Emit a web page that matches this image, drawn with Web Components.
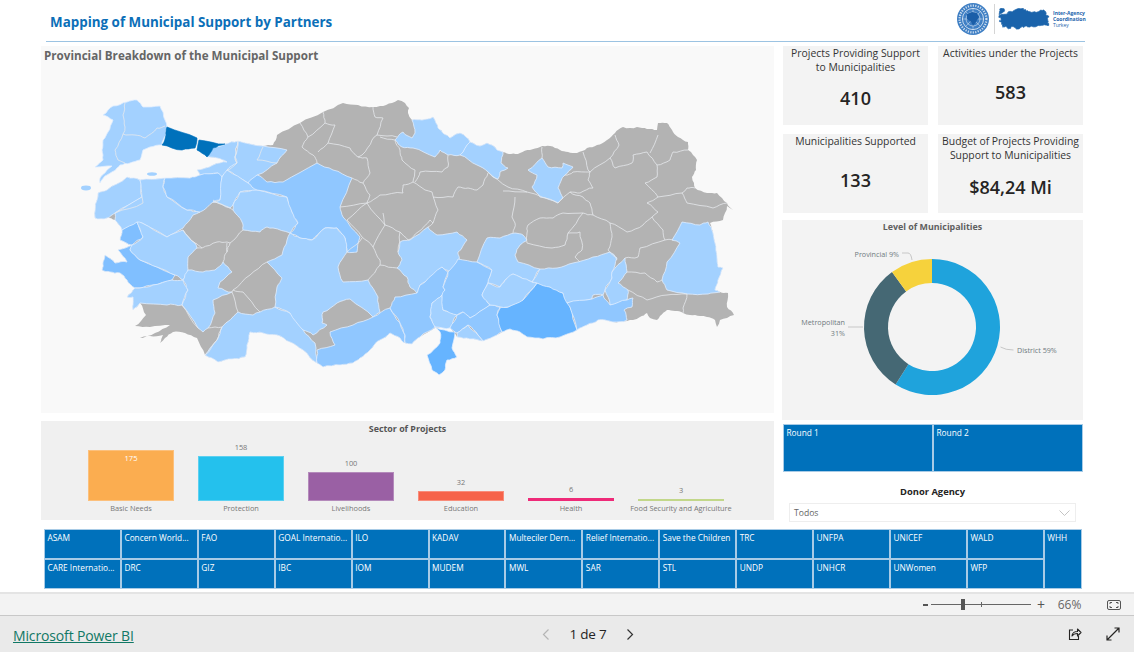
<!DOCTYPE html>
<html lang="en"><head><meta charset="utf-8"><title>Mapping of Municipal Support by Partners</title>
<style>
html,body{margin:0;padding:0;height:652px;overflow:hidden;background:#fff;font-family:"Open Sans","Liberation Sans",sans-serif}
</style></head><body>
<rs-app></rs-app>
<script>
const L='#a3d1ff',M='#90c7ff',I='#80bfff',S='#66b4ff',D='#0071bb';
const BASE="207,157 213,148 225,144 238,141 263,146 273,145 277,135 300,123 323,112 343,103 358,105 373,107 380,106 392,103 398,100 405,103 409,108 408,113 412,120 422,120 433,117 436,123 438,128 444,134 450,138 456,134 460,133 466,137 470,142 473,143 480,146 487,143 492,145 497,150 503,152 511,154 520,153 530,150 540,147 550,146 560,150 568,152 577,153 587,148 597,145 607,140 615,133 623,127 630,128 637,127 647,129 657,130 658,123 667,123 672,130 678,137 683,140 688,142 688,150 693,155 697,160 696,170 692,177 694,183 695,188 707,193 717,193 722,198 727,203 733,210 727,206 725,213 723,220 710,223 713,233 715,243 717,257 718,267 723,268 718,280 715,290 720,292 728,293 727,307 734,315 727,318 720,320 717,327 715,320 707,317 700,316 690,315 683,313 675,311 667,310 660,316 657,320 650,318 647,313 640,317 633,320 627,321 613,322 605,320 598,320 587,325 577,330 560,337 543,339 527,337 520,332 510,329 497,335 483,341 470,339 457,337 450,328 435,328 420,337 412,344 405,343 400,338 390,333 380,340 370,350 360,358 353,363 340,365 323,367 317,363 303,350 290,342 277,335 263,333 250,332 247,345 245,357 232,359 218,362 205,355 197,338 185,333 173,332 165,338 160,343 163,335 150,336 140,338 155,333 170,325 150,327 135,326 146,315 140,303 133,310 133,297 127,297 135,288 127,280 120,273 110,272 102,270 103,262 105,255 115,263 127,262 118,250 132,245 120,240 122,230 115,220 107,218 95,218 97,200 98,193 107,190 127,177 140,180 165,178 190,178 200,175 197,170 213,165 227,162 217,158";
const REGIONS=[
[L,"127,102 137,100 143,107 160,106 163,112 165,120 167,127 166,135 162,145 150,147 143,150 140,160 130,163 120,165 117,168 107,175 100,183 100,178 107,170 112,166 97,167 95,167 103,160 102,150 103,140 108,132 113,120 103,115 108,110 113,106"],
[D,"167,127 197,138 195,148 182,150 162,145 166,135"],
[D,"199,140 225,144 213,148 207,157 197,150"],
[L,"207,157 213,148 225,144 238,141 235,157 237,163 227,170 222,177 218,173 200,175 197,170 213,165 227,162 217,158"],
[L,"238,141 263,146 287,150 277,163 257,175 248,183 227,170 237,163 235,157"],
[L,"98,193 107,190 127,177 140,180 142,197 115,213 107,218 95,218 97,200"],
[L,"140,180 165,178 163,187 167,197 187,210 200,212 193,215 183,228 167,237 142,223 122,230 115,220 115,213 142,197"],
[M,"165,178 190,178 200,175 218,173 222,177 220,200 213,202 200,212 187,210 167,197 163,187"],
[L,"222,177 227,170 248,183 257,190 240,192 233,205 230,208 213,202 220,200"],
[L,"240,192 257,190 287,197 292,212 298,223 290,233 273,228 267,227 260,232 243,230 242,222 233,210 233,205"],
[M,"248,183 257,175 267,182 283,182 317,163 333,170 352,178 340,207 343,217 360,237 357,252 347,252 345,238 337,228 325,228 312,240 300,238 290,233 298,223 292,212 287,197 257,190"],
[I,"122,230 137,222 143,237 132,245 130,250 140,260 157,267 175,275 172,280 153,285 140,288 135,288 127,280 120,273 110,272 102,270 103,262 105,255 115,263 127,262 118,250 132,245 120,240"],
[L,"137,222 142,223 167,237 183,230 195,243 197,248 188,257 188,270 183,280 175,275 157,267 140,260 130,250 132,245 143,237"],
[L,"140,288 153,285 172,280 183,280 188,290 182,305 167,305 140,303 133,310 133,297 127,297 135,288"],
[L,"183,280 188,270 203,272 215,270 223,262 232,272 220,282 218,288 232,292 213,300 215,313 208,328 203,332 198,328 182,305 188,290"],
[L,"275,307 290,313 303,330 315,343 317,363 303,350 290,342 277,335 263,333 250,332 247,345 245,357 232,359 218,362 205,355 217,340 222,327 238,312 253,315 260,312"],
[L,"267,262 282,255 287,240 290,233 300,238 312,240 325,228 337,228 345,238 347,252 338,267 343,282 368,280 378,297 380,312 373,317 350,299 337,303 323,312 322,323 327,325 313,335 303,330 290,313 275,307 277,287 282,278"],
[M,"317,363 317,350 335,345 330,332 353,325 373,317 390,308 400,323 405,335 404,343 400,338 390,333 380,340 370,350 360,358 353,363 340,365 323,367"],
[L,"400,242 410,240 428,227 437,235 457,232 467,240 458,252 459,260 450,272 442,267 425,282 420,285 417,293 410,287 407,277 397,268 402,260 398,252"],
[M,"395,297 417,293 420,285 425,282 442,267 448,272 443,287 445,290 442,295 432,303 430,317 435,327 420,337 412,344 405,343 405,335 400,323 390,308"],
[L,"442,295 443,310 457,315 450,328 435,327 430,317 432,303"],
[M,"448,272 458,259 477,262 492,270 488,283 482,295 490,305 470,318 463,312 457,315 443,310 442,295 445,290 443,287"],
[M,"457,315 463,312 470,318 490,305 500,307 497,315 502,332 497,335 483,341 478,335 468,325 457,333 450,328"],
[L,"457,333 468,325 478,335 483,341 470,339 457,337"],
[S,"435,327 455,332 452,348 457,357 447,360 445,370 439,375 432,370 427,355 440,343 440,332"],
[S,"500,308 508,307 523,300 537,283 550,287 563,293 570,307 577,330 560,337 543,339 527,337 520,332 510,329 502,332 497,315"],
[L,"477,262 487,238 500,238 515,233 523,235 527,240 520,245 515,255 518,262 540,269 532,282 520,277 513,274 505,280 500,287 488,283 492,270"],
[L,"488,283 500,287 505,280 513,274 520,277 532,282 537,283 523,300 508,307 490,305 482,295"],
[L,"540,269 557,268 573,263 593,257 610,252 617,258 612,272 612,278 605,290 603,295 593,295 592,299 567,303 563,293 550,287 537,283 532,282"],
[L,"612,272 625,258 627,272 618,283 628,290 627,300 610,305 605,290 612,278"],
[M,"567,303 592,299 603,295 610,305 627,300 633,298 632,307 624,310 627,320 613,322 605,320 598,320 587,325 577,330 570,307"],
[L,"682,222 700,225 708,222 713,233 715,243 717,257 718,267 723,268 718,280 715,290 720,292 708,294 687,294 667,290 662,280 667,262 680,243 672,240"],
[L,"412,120 422,120 433,117 436,123 438,128 444,134 450,138 456,134 460,133 466,137 470,142 460,155 448,155 440,150 435,157 413,148 402,147 395,140 403,132 412,138 415,133"],
[L,"470,142 473,143 480,146 487,143 492,145 497,150 503,152 501,163 508,168 500,172 498,179 493,177 488,172 477,165 460,155"],
[L,"542,158 548,167 562,168 563,163 573,167 565,175 558,188 563,198 558,203 540,197 532,187 537,175 528,170"]
];
const LINES=[
"125,103 123,115 125,127 123,134 115,150 118,160 125,163","123,134 135,135 145,138 157,128 165,126",
"142,197 143,203 115,213","263,147 257,160 277,163","238,141 235,157 237,163 227,170",
"300,123 308,137 302,147 313,155 317,163","308,137 325,123 323,112","325,123 335,125 328,143 318,152","328,143 350,148 358,157 367,158 370,173 363,183 352,178",
"373,107 375,117 383,118 377,135 397,137","377,135 372,140 362,155 358,157","380,137 395,140 400,150 402,160 415,170 413,182 403,185 403,193 380,195 367,203",
"413,182 425,190 432,192 438,210 433,223 428,227","433,197 453,197 458,187 468,188 477,190 483,185 488,173","415,182 420,172 442,172 448,167 448,155",
"488,172 508,187 527,192 558,203","515,197 512,217 515,223 513,233","503,191 527,192","558,203 570,192 583,197 590,203 593,215 583,213 563,213 553,218 540,218 528,225 527,233 527,243 552,248 565,245 568,233 580,232 582,250 575,257 580,262","583,213 568,233",
"593,215 610,223 612,237 608,250 617,260","610,223 627,232 643,225 652,217 658,212 647,203 658,197 645,183 657,177 657,165 647,152 633,155 632,163 615,168 610,158 590,172 588,180 593,188 580,193 570,192",
"590,172 573,172 565,175","542,147 542,158","583,152 588,170 590,172","615,135 619,145 610,158","658,135 650,153","657,165 670,160 673,152 688,150","658,197 682,193 687,188 695,188","682,193 687,203 713,208 727,203",
"652,217 663,230 665,240 673,240","665,240 640,248 638,257 625,258","627,272 645,273 657,282 662,280","628,290 647,300 667,295 687,294","687,294 683,308 683,313",
"367,203 347,220 362,237 373,247 385,225 367,203","383,213 385,225 400,232 408,240","373,247 380,260 380,265 397,268","380,265 368,280","400,232 398,252","362,238 347,252",
"408,240 418,232 430,220 433,223","340,207 367,203","363,183 370,195 367,203",
"183,230 195,243 202,248 217,242 227,242 230,243 243,230","202,248 197,248","227,243 227,252 223,262","230,243 227,252","267,262 250,275 233,290 232,292","233,290 243,292 260,312","232,292 238,312",
"208,328 222,327","222,327 217,340 205,355","182,305 198,328","213,200 233,210"
];
function h(a,b){const s=(a[0]+b[0])*12.9898+(a[1]+b[1])*78.233;const x=Math.sin(s)*43758.5453;return x-Math.floor(x)-.5}
function jag(pts){const out=[pts[0]];for(let i=1;i<pts.length;i++){sub(pts[i-1],pts[i],out,2)}return out}
function sub(a,b,out,n){const dx=b[0]-a[0],dy=b[1]-a[1],len=Math.hypot(dx,dy);if(n===0||len<4){out.push(b);return}
 const t=h(a,b)*Math.min(len*.22,1.6);const m=[(a[0]+b[0])/2-dy/len*t,(a[1]+b[1])/2+dx/len*t];sub(a,m,out,n-1);sub(m,b,out,n-1)}
const parse=s=>s.trim().split(/\s+/).map(p=>p.split(',').map(Number));
const poly=(s,close)=>{let p=parse(s);if(close)p=p.concat([p[0]]);return 'M'+jag(p).map(q=>q[0].toFixed(1)+' '+q[1].toFixed(1)).join('L')+(close?'Z':'')};

function def(name,css,html,after){customElements.define(name,class extends HTMLElement{constructor(){super();const r=this.attachShadow({mode:'open'});r.innerHTML='<style>'+css+'</style>'+(typeof html==='function'?html(this):html);}
 connectedCallback(){if(after)after(this)}})}

def('rs-header',`:host{display:flex;align-items:center;justify-content:space-between;height:41px;margin:0 49px 0 46px;border-bottom:1px solid #9cc3e2;box-sizing:content-box}
 h1{margin:2px 0 0 4px;font:700 13.4px "Open Sans",sans-serif;color:#0c6fb8;white-space:nowrap}
 .logos{display:flex;align-items:center;height:41px;margin-bottom:3px}
 .div{width:1px;height:30px;background:#d5d5d5;margin:0 3px 0 4px}
 .org{font:700 5px/6px "Open Sans",sans-serif;color:#1a63ab;margin-left:3px;width:32px}.org i{font-style:normal;font-weight:400}`,
 ()=>`<h1>Mapping of Municipal Support by Partners</h1><div class="logos">
 <svg width="34" height="32" viewBox="0 0 34 32" aria-hidden="true"><circle cx="17" cy="16" r="16" fill="#3f7fc4"/><g fill="none" stroke="#fff"><circle cx="17" cy="16" r="13.4" stroke-width="2.2" stroke-dasharray="1.2 1.300" opacity=".75"/><circle cx="17" cy="16" r="10.6" stroke-width=".7"/><circle cx="17" cy="16" r="7" stroke-width=".6" opacity=".8"/><circle cx="17" cy="16" r="3.5" stroke-width=".6" opacity=".8"/><path d="M17 5.500v21M6.500 16h21M9.600 8.600l14.800 14.800M24.400 8.600L9.600 23.400" stroke-width=".5" opacity=".8"/></g><path d="M11 11l5-2 5 1 2 4-3 5-3 4-2-4-4-3z" fill="#1b5ea8"/></svg>
 <span class="div"></span>
 <svg width="52" height="22" viewBox="92 98 645 280" aria-hidden="true"><g fill="#1a63ab" stroke="#1a63ab" stroke-width="10" stroke-linejoin="round"><path d="${poly(BASE,true)}"/><path d="${poly(REGIONS[0][1],true)}"/></g></svg>
 <div class="org">Inter-Agency<br>Coordination<br><i>Turkey</i></div></div>`);

def('rs-map',`:host{display:flex;flex-direction:column;background:#f9f9f9;height:367px;width:733px}
 .t{font:700 11.65px/20px "Open Sans",sans-serif;color:#666;padding-left:3px;white-space:nowrap;height:20px}
 svg{display:block;width:733px;height:347px}`,
 ()=>`<div class="t">Provincial Breakdown of the Municipal Support</div>
 <svg viewBox="41 66 733 347" aria-label="Map of Turkey">
 <g stroke-linejoin="round">
 <path d="${poly(BASE,true)}" fill="#b3b3b3"/>
 <ellipse cx="86" cy="188" rx="5" ry="2.4" fill="${L}"/><ellipse cx="152" cy="174" rx="5" ry="1.8" fill="${L}"/>
 ${REGIONS.map(r=>`<path d="${poly(r[1],true)}" fill="${r[0]}" stroke="#dfeeff" stroke-width=".8"/>`).join('')}
 ${LINES.map(l=>`<path d="${poly(l,false)}" fill="none" stroke="#e6e9ec" stroke-width=".8"/>`).join('')}
 ${REGIONS.filter(r=>r[0]===D).map(r=>`<path d="${poly(r[1],true)}" fill="${D}" stroke="${D}" stroke-width=".6"/>`).join('')}
 </g></svg>`);

def('rs-kpi',`:host{display:flex;flex-direction:column;align-items:center;background:#f3f3f3;height:79px;color:#252423;text-align:center;box-sizing:border-box}
 .t{font:400 10.4px/14px "Open Sans",sans-serif;color:#333;white-space:pre-line}
 .v{font:600 18px/24px "Open Sans",sans-serif;flex:1;display:flex;align-items:center;color:#252423}`,
 el=>`<div class="t"><slot></slot></div><div class="v" style="padding-bottom:${el.getAttribute('pb')||0}px;">${el.getAttribute('value')}</div>`);

def('rs-donut',`:host{display:block;background:#f3f3f3;height:200px;width:301px}svg{display:block}
 text{font-family:"Open Sans",sans-serif;font-size:7.2px;fill:#6f7a80}.h{font-size:8.9px;font-weight:700;fill:#5f5f5f}`,
 ()=>{const cx=150,cy=107,R=68,r=44;const P=(a,q)=>[cx+q*Math.sin(a),cy-q*Math.cos(a)];
 const seg=(a,b,c)=>{const A=a*Math.PI*2,B=b*Math.PI*2,[x1,y1]=P(A,R),[x2,y2]=P(B,R),[x3,y3]=P(B,r),[x4,y4]=P(A,r),l=(b-a)>.5?1:0;
  return `<path fill="${c}" d="M${x1} ${y1}A${R} ${R} 0 ${l} 1 ${x2} ${y2}L${x3} ${y3}A${r} ${r} 0 ${l} 0 ${x4} ${y4}Z"/>`};
 return `<svg width="301" height="200" viewBox="0 0 301 200"><text class="h" x="150.500" y="10" text-anchor="middle">Level of Municipalities</text>
 ${seg(0,.59,'#1fa3dc')}${seg(.59,.9,'#456874')}${seg(.9,1,'#f6d23c')}
 <path d="M218.500 127q5 3 13 3M66 107h15M120 33h6q3 0 4 7" fill="none" stroke="#bbb" stroke-width=".8"/>
 <text x="235" y="133">District 59%</text>
 <text x="63" y="105" text-anchor="end">Metropolitan</text><text x="63" y="116" text-anchor="end">31%</text>
 <text x="117" y="37" text-anchor="end">Provincial 9%</text></svg>`});

def('rs-bars',`:host{display:block;background:#f0f0f0;height:99px;width:733px;box-sizing:border-box}
 .t{font:700 8.9px/16px "Open Sans",sans-serif;color:#555;text-align:center}
 .c{display:flex;justify-content:center;gap:24px;height:76px;margin-left:-3px;align-items:flex-end}`,
 `<div class="t">Sector of Projects</div><div class="c"><slot></slot></div>`);
def('rs-bar',`:host{display:flex;flex-direction:column;justify-content:flex-end;align-items:center;width:86px;height:100%;position:relative}
 .v{font:400 7.4px/10px "Open Sans",sans-serif;color:#777;height:10px;margin-bottom:4.5px}
 .b{width:100%;box-sizing:border-box;border:1px solid;text-align:center;font:400 7.6px/15px "Open Sans",sans-serif;color:#fff}
 .l{font:400 7.4px/11px "Open Sans",sans-serif;color:#777;white-space:nowrap;margin-top:2px;height:11px;margin-bottom:-1px}`,
 el=>{const g=k=>el.getAttribute(k),inn=el.hasAttribute('inside');return `${inn?'':`<div class="v">${g('value')}</div>`}<div class="b" style="height:${g('h')}px;background:${g('c')};border-color:${g('bc')}">${inn?g('value'):''}</div><div class="l"><slot></slot></div>`});

def('rs-tile',`:host{display:block;background:#0071bb;color:#fff;font:400 8.3px/12px "Open Sans",sans-serif;padding:3px 3px 2px 3.5px;box-sizing:border-box;outline:1px solid #a8cbe6;outline-offset:-1px;white-space:nowrap;overflow:hidden;min-width:0}`,`<slot></slot>`);

def('rs-round',`:host{display:grid;grid-template-columns:150px 150px;height:48px;width:300px;margin-left:1px}`,`<slot></slot>`);

def('rs-agencies',`:host{display:grid;grid-template-columns:repeat(13,76.92px) 38px;grid-template-rows:30px 30px;margin:7px 0 0 44px;width:1039px;height:60px}`,`<slot></slot>`);

def('rs-donor',`:host{display:block;width:301px}
 .t{font:700 9.4px/13px "Open Sans",sans-serif;color:#252423;text-align:center;margin-top:13px;}
 .d{margin:5px 7px 0 7px;height:19px;box-sizing:border-box;border:1px solid #eee;background:#fff;display:flex;align-items:center;justify-content:space-between;padding:1px 5px 0 4px;font:400 8.6px "Open Sans",sans-serif;color:#666}`,
 `<div class="t">Donor Agency</div><div class="d"><span>Todos</span><svg width="11" height="6" viewBox="0 0 11 6"><path d="M.5.5l5 5 5-5" fill="none" stroke="#c4c4c4"/></svg></div>`);

def('rs-zoombar',`:host{display:flex;align-items:center;justify-content:flex-end;height:24px;box-sizing:border-box;background:#f3f3f3;border-top:2px solid #e4e4e4;border-bottom:1px solid #c8c8c8;color:#666;font:400 11.5px "Open Sans",sans-serif}
 .m{display:block;width:5px;height:2px;background:#555;margin-right:3px}
 .s{position:relative;width:100px;height:1px;background:#666;margin-right:6px}
 .th{position:absolute;left:30px;top:-5px;width:4px;height:11px;background:#555}.tk{position:absolute;left:50px;top:-2px;width:1px;height:5px;background:#666}
 .p{font-size:14px;line-height:14px;margin-right:12px;color:#555}
 .z{margin-right:25px;width:25px;text-align:center;font-size:12px}svg{margin-right:13px}`,
 `<span class="m"></span><span class="s"><i class="th"></i><i class="tk"></i></span><span class="p">+</span><span class="z">66%</span>
 <svg width="14" height="10" viewBox="0 0 14 10"><rect x=".5" y=".5" width="13" height="9" rx="1.500" fill="none" stroke="#555"/><path d="M3 4V2.500h2M9 2.500h2V4M11 6v1.500H9M5 7.500H3V6" fill="none" stroke="#555"/></svg>`);

def('rs-footer',`:host{display:grid;grid-template-columns:1fr auto 1fr;align-items:center;height:36px;background:#eaeaea;font:400 14px "Open Sans",sans-serif;color:#252423}
 a{color:#117865;text-decoration:underline;margin:2px 0 0 13px;font-size:14px;white-space:nowrap;letter-spacing:-.14px}
 .p{display:flex;align-items:center;gap:18px;font-size:13.5px;margin-left:42px;letter-spacing:-.2px}
 .r{display:flex;justify-content:flex-end;gap:24px;padding-right:14px}`,
 `<a href="#">Microsoft Power BI</a>
 <div class="p"><svg width="10" height="13" viewBox="0 0 10 13"><path d="M7.500 1.500l-5 5 5 5" fill="none" stroke="#b5b5b5" stroke-width="1.200"/></svg><span>1 de 7</span><svg width="10" height="13" viewBox="0 0 10 13"><path d="M2.500 1.500l5 5-5 5" fill="none" stroke="#333" stroke-width="1.200"/></svg></div>
 <div class="r"><svg width="14" height="14" viewBox="0 0 14 14"><path d="M5 3H1.500v9.500h9V9" fill="none" stroke="#252423" stroke-width="1.100"/><path d="M4 9c0-3 2.500-4.500 5.500-4.500V2L13 5.500 9.500 9V6.500C7 6.500 5 7.500 4 9z" fill="none" stroke="#252423" stroke-width="1.100" stroke-linejoin="round"/></svg>
 <svg width="14" height="14" viewBox="0 0 14 14"><path d="M8.500 1H13v4.500M13 1L1 13M1 8.500V13h4.500" fill="none" stroke="#252423" stroke-width="1.200"/></svg></div>`);

const AG=[['ASAM','Concern World...','FAO','GOAL Internatio...','ILO','KADAV','Multeciler Dern...','Relief Internatio...','Save the Children','TRC','UNFPA','UNICEF','WALD'],
 ['CARE Internatio...','DRC','GIZ','IBC','IOM','MUDEM','MWL','SAR','STL','UNDP','UNHCR','UNWomen','WFP']];
def('rs-app',`:host{display:block;width:1134px;height:652px;overflow:hidden}
 .top{height:592px;background:#fff;box-sizing:border-box}
 .main{display:grid;grid-template-columns:733px 301px;column-gap:8px;margin:4px 0 0 41px}
 .l{display:flex;flex-direction:column;gap:8px}.r{display:flex;flex-direction:column;margin-left:0}
 .k{display:grid;grid-template-columns:145px 145px;column-gap:10px;row-gap:9px;margin-left:1px;margin-bottom:7px}
 rs-round{margin-top:4px}`,
 `<div class="top"><rs-header></rs-header>
 <div class="main"><div class="l"><rs-map></rs-map>
 <rs-bars><rs-bar value="175" inside h="51" c="#fbad50" bc="#fcc07c">Basic Needs</rs-bar><rs-bar value="158" h="45" c="#24c1ed" bc="#5cd0f0">Protection</rs-bar><rs-bar value="100" h="29" c="#9a60a4" bc="#b48abb">Livelihoods</rs-bar><rs-bar value="32" h="10" c="#f66249" bc="#f88c7a">Education</rs-bar><rs-bar value="6" h="3" c="#ee2a78" bc="#ee2a78">Health</rs-bar><rs-bar value="3" h="2" c="#c2d78a" bc="#c2d78a">Food Security and Agriculture</rs-bar></rs-bars></div>
 <div class="r"><div class="k"><rs-kpi value="410" pb="4">Projects Providing Support
to Municipalities</rs-kpi><rs-kpi value="583" pb="2">Activities under the Projects</rs-kpi><rs-kpi value="133" pb="2">Municipalities Supported</rs-kpi><rs-kpi value="$84,24 Mi" pb="2">Budget of Projects Providing
Support to Municipalities</rs-kpi></div>
 <rs-donut></rs-donut><rs-round><rs-tile>Round 1</rs-tile><rs-tile>Round 2</rs-tile></rs-round><rs-donor></rs-donor></div></div>
 <rs-agencies>${AG[0].map(t=>`<rs-tile>${t}</rs-tile>`).join('')}<rs-tile style="grid-row:1/3;grid-column:14">WHH</rs-tile>${AG[1].map(t=>`<rs-tile>${t}</rs-tile>`).join('')}</rs-agencies></div>
 <rs-zoombar></rs-zoombar><rs-footer></rs-footer>`);
</script></body></html>
